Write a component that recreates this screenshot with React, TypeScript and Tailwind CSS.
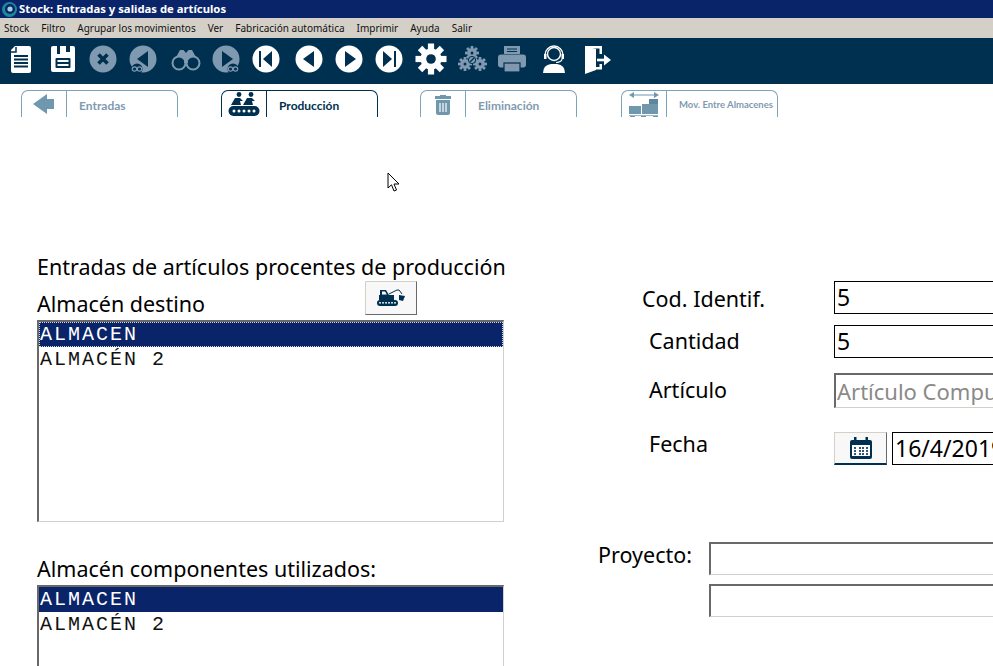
import type { ReactNode } from 'react';

const ON = '#ffffff';
const OFF = '#7f9ab0';
const BG = '#00304f';

const menus = ['Stock', 'Filtro', 'Agrupar los movimientos', 'Ver', 'Fabricación automática', 'Imprimir', 'Ayuda', 'Salir'];

function Svg({ size = 32, children }: { size?: number; children: ReactNode }) {
  return (
    <svg width={size} height={size} viewBox="0 0 32 32">
      {children}
    </svg>
  );
}

function DocIcon() {
  return (
    <Svg>
      <path d="M10 3 h14 a2 2 0 0 1 2 2 v23 a2 2 0 0 1 -2 2 h-16 a2 2 0 0 1 -2 -2 v-21 z" fill={ON} />
      <path d="M11 4 v5 h-5" fill="none" stroke={BG} strokeWidth="1.5" />
      <path d="M9 13 h14 M9 16.5 h14 M9 20 h14 M9 23.5 h14" stroke={BG} strokeWidth="1.8" />
    </Svg>
  );
}

function SaveIcon() {
  return (
    <Svg>
      <path d="M6 3 h20 a2 2 0 0 1 2 2 v22 a2 2 0 0 1 -2 2 h-20 a2 2 0 0 1 -2 -2 v-22 a2 2 0 0 1 2 -2 z" fill={ON} />
      <rect x="10" y="3" width="3" height="8" fill={BG} />
      <rect x="19" y="3" width="4" height="6" fill={BG} />
      <rect x="8.5" y="15" width="15" height="10" rx="1" fill={BG} />
      <path d="M10.5 18 h11 M10.5 22 h11" stroke={ON} strokeWidth="1.8" />
    </Svg>
  );
}

function CloseIcon() {
  return (
    <Svg>
      <circle cx="16" cy="16" r="13.5" fill={OFF} />
      <path d="M11.5 11.5 L20.5 20.5 M20.5 11.5 L11.5 20.5" stroke={BG} strokeWidth="3.6" />
    </Svg>
  );
}

function BinocularsIcon() {
  return (
    <Svg>
      <path d="M4 18 L10 7 h3.5 l2.5 3 l2.5 -3 h3.5 l6 11 z" fill={OFF} />
      <circle cx="9" cy="20" r="6.5" fill={BG} stroke={OFF} strokeWidth="2" />
      <circle cx="23" cy="20" r="6.5" fill={BG} stroke={OFF} strokeWidth="2" />
      <rect x="14" y="17" width="4" height="3" fill={OFF} />
    </Svg>
  );
}

function NavIcon({ dir, bar, color, search }: { dir: 'l' | 'r'; bar?: boolean; color: string; search?: boolean }) {
  const tri = dir === 'l' ? 'M21 8 V24 L10 16 Z' : 'M12 8 V24 L23 16 Z';
  const barX = dir === 'l' ? 10 : 22;
  const shifted = bar ? (dir === 'l' ? 'M22 8 V24 L13 16 Z' : 'M10 8 V24 L19 16 Z') : tri;
  return (
    <Svg>
      <circle cx="16" cy="16" r="13.5" fill={color} />
      <path d={shifted} fill={BG} />
      {bar && <rect x={barX - 1} y="8" width="2" height="16" fill={BG} />}
      {search && (
        <>
          <circle cx={dir === 'l' ? 10 : 23} cy="26" r="5.5" fill={BG} />
          <circle cx={dir === 'l' ? 7.5 : 20.5} cy="26" r="2.2" fill="none" stroke={color} strokeWidth="1.2" />
          <circle cx={dir === 'l' ? 12.5 : 25.5} cy="26" r="2.2" fill="none" stroke={color} strokeWidth="1.2" />
        </>
      )}
    </Svg>
  );
}

function GearShape({ cx, cy, r, c, hole }: { cx: number; cy: number; r: number; c: string; hole: number }) {
  const teeth = [0, 45, 90, 135, 180, 225, 270, 315];
  return (
    <g>
      {teeth.map((a) => (
        <rect
          key={a}
          x={cx - r * 0.2}
          y={cy - r}
          width={r * 0.4}
          height={r * 0.5}
          fill={c}
          transform={`rotate(${a} ${cx} ${cy})`}
        />
      ))}
      <circle cx={cx} cy={cy} r={r * 0.68} fill={c} />
      <circle cx={cx} cy={cy} r={hole} fill={BG} />
    </g>
  );
}

function PrinterIcon() {
  return (
    <Svg>
      <path d="M8 3 h16 v8 h-16 z" fill={OFF} />
      <path d="M11 6 h10 M11 8.5 h10" stroke={BG} strokeWidth="1.2" />
      <rect x="2" y="11.5" width="28" height="13" rx="3" fill={OFF} />
      <rect x="8" y="20" width="16" height="9" fill={OFF} stroke={BG} strokeWidth="1.2" />
    </Svg>
  );
}

function SupportIcon() {
  return (
    <Svg>
      <circle cx="16" cy="11" r="6.5" fill={BG} stroke={ON} strokeWidth="1.4" />
      <path d="M7 12 a9 9 0 0 1 18 0" fill="none" stroke={ON} strokeWidth="1.4" />
      <rect x="6" y="11" width="2.5" height="5" fill={ON} />
      <rect x="23.5" y="11" width="2.5" height="5" fill={ON} />
      <path d="M24 16 q0 3 -6 3.5" fill="none" stroke={ON} strokeWidth="1.2" />
      <path d="M5 30 q0 -8 8 -9 h6 q8 1 8 9 z" fill={ON} />
    </Svg>
  );
}

function ExitIcon() {
  return (
    <Svg>
      <path d="M4 3 L15 6 V27 L4 31 Z" fill={ON} />
      <path d="M4 3 h17 v8 h-2.5 v-5.5 h-14.5 z" fill={ON} />
      <path d="M15 24 h3.5 v-3 h2.5 v5.5 h-6 z" fill={ON} />
      <path d="M16 17 h10" stroke={ON} strokeWidth="2.6" />
      <path d="M23 11.5 L30 17 L23 22.5 Z" fill={ON} />
    </Svg>
  );
}

const tools: { cell: string; icon: ReactNode }[] = [
  { cell: 'w-[41px]', icon: <DocIcon /> },
  { cell: 'w-[44px]', icon: <SaveIcon /> },
  { cell: 'w-[36px]', icon: <CloseIcon /> },
  { cell: 'w-[44px]', icon: <NavIcon dir="l" color={OFF} search /> },
  { cell: 'w-[42px]', icon: <BinocularsIcon /> },
  { cell: 'w-[38px]', icon: <NavIcon dir="r" color={OFF} search /> },
  { cell: 'w-[42px]', icon: <NavIcon dir="l" bar color={ON} /> },
  { cell: 'w-[44px]', icon: <NavIcon dir="l" color={ON} /> },
  { cell: 'w-[36px]', icon: <NavIcon dir="r" color={ON} /> },
  { cell: 'w-[44px]', icon: <NavIcon dir="r" bar color={ON} /> },
  {
    cell: 'w-[40px]',
    icon: (
      <Svg>
        <GearShape cx={16} cy={16} r={15.5} c={ON} hole={4.8} />
      </Svg>
    ),
  },
  {
    cell: 'w-[42px]',
    icon: (
      <Svg>
        <GearShape cx={16} cy={10} r={7} c={OFF} hole={1.5} />
        <GearShape cx={9} cy={21} r={7} c={OFF} hole={1.5} />
        <GearShape cx={24} cy={21} r={7} c={OFF} hole={1.5} />
        <circle cx="16" cy="17" r="3.6" fill={OFF} stroke={BG} strokeWidth="1" />
        <path d="M14 19 L18 15" stroke={BG} strokeWidth="1.2" />
      </Svg>
    ),
  },
  { cell: 'w-[38px]', icon: <PrinterIcon /> },
  { cell: 'w-[46px]', icon: <SupportIcon /> },
  { cell: 'w-[40px]', icon: <ExitIcon /> },
];

function ConveyorIcon() {
  const c = '#00304f';
  return (
    <svg width="32" height="24" viewBox="0 0 32 24">
      <circle cx="11" cy="2.5" r="2.4" fill={c} />
      <path d="M3 13 L7 6 h5 l3 3 h-3 l1 4 z" fill={c} />
      <circle cx="23" cy="2.5" r="2.4" fill={c} />
      <path d="M15 13 L19 6 h5 l3 3 h-3 l1 4 z" fill={c} />
      <rect x="0.5" y="14" width="31" height="10" rx="5" fill={c} />
      {[6, 11, 16, 21, 26].map((x) => (
        <circle key={x} cx={x} cy="19" r="1.5" fill="#ffffff" />
      ))}
    </svg>
  );
}

function ArrowIcon() {
  return (
    <svg width="22" height="20" viewBox="0 0 22 20">
      <path d="M0 10 L14 0 L14 5 L21 5 L21 15 L14 15 L14 20 Z" fill="#6f97ae" />
    </svg>
  );
}

function TrashIcon() {
  return (
    <svg width="18" height="22" viewBox="0 0 18 22">
      <path d="M6 2 h6 v1 h5 v3 h-16 v-3 h5 z" fill="#6f97ae" />
      <path d="M2 7 h14 v13 a2 2 0 0 1 -2 2 h-10 a2 2 0 0 1 -2 -2 z" fill="#6f97ae" />
      <path d="M6 10 v9 M9 10 v9 M12 10 v9" stroke="#ffffff" strokeWidth="1.2" />
    </svg>
  );
}

function MoveIcon() {
  return (
    <svg width="32" height="27" viewBox="0 0 32 27">
      <path d="M3 4 h26" stroke="#6f97ae" strokeWidth="1" />
      <path d="M1 4 L6 1 V7 Z M31 4 L26 1 V7 Z" fill="#6f97ae" />
      <rect x="21" y="8" width="9" height="5" fill="#5d879e" />
      <rect x="14" y="13" width="16" height="10" fill="#7197ad" />
      <rect x="1" y="15" width="12" height="8" fill="#7197ad" />
      <path d="M1 24 h29 v1 h-29 z" fill="#9db8c8" />
      <rect x="2" y="25" width="5" height="2" fill="#7197ad" />
      <rect x="13" y="25" width="5" height="2" fill="#7197ad" />
      <rect x="25" y="25" width="5" height="2" fill="#7197ad" />
    </svg>
  );
}

function ExcavatorIcon() {
  const c = '#00304f';
  return (
    <svg width="29" height="17" viewBox="0 0 29 17">
      <path d="M3 1 h6 l3 5 h5 v5 h-15 v-5 h1 z" fill={c} />
      <path d="M5 2.5 h3 l1.8 3 h-4.8 z" fill="#ffffff" />
      <path d="M12 5 L20 1 h2 L25 5" fill="none" stroke={c} strokeWidth="1" />
      <path d="M22 6 L28 7 L26 12 L22 11 Z" fill={c} />
      <rect x="0" y="11" width="21" height="6" rx="3" fill={c} />
      {[3, 6, 9, 12, 15, 18].map((x) => (
        <rect key={x} x={x - 0.8} y="13" width="1.6" height="1.6" fill="#ffffff" />
      ))}
    </svg>
  );
}

function CalendarIcon() {
  const c = '#00304f';
  return (
    <svg width="24" height="22" viewBox="0 0 24 22">
      <rect x="1" y="3" width="22" height="19" rx="2" fill={c} />
      <rect x="5" y="0" width="2.5" height="5" fill={c} />
      <rect x="16.5" y="0" width="2.5" height="5" fill={c} />
      <rect x="3" y="8" width="18" height="11" fill="#ffffff" />
      <path d="M6 10 v8 M11 10 v8 M14 10 v8 M18 10 v8" stroke={c} strokeWidth="1.6" strokeDasharray="2 1" />
    </svg>
  );
}

function Tab({ icon, label, active, small, className }: { icon: ReactNode; label: string; active?: boolean; small?: boolean; className: string }) {
  return (
    <div
      className={`flex h-[27px] w-[157px] overflow-hidden rounded-t-[7px] border border-b-0 ${
        active ? 'border-[#00304f]' : 'border-[#7fa3b8]'
      } ${className}`}
    >
      <div className={`flex w-[45px] shrink-0 items-center justify-center border-r ${active ? 'border-[#00304f]' : 'border-[#7fa3b8]'}`}>{icon}</div>
      <span
        className={`flex items-center pt-[3px] pl-[12px] font-['Lato'] font-bold ${small ? 'text-[9.5px]' : 'text-[12px]'} ${
          active ? 'text-[#00304f]' : 'text-[#7f9ab0]'
        }`}
      >
        {label}
      </span>
    </div>
  );
}

function ListBox({ focused, className }: { focused?: boolean; className: string }) {
  return (
    <ul className={`w-[467px] border-t-2 border-l-2 border-r border-b border-t-[#696969] border-l-[#696969] border-r-[#d0d0d0] border-b-[#d0d0d0] bg-white font-['Liberation_Mono',monospace] text-[20px] tracking-[2px] ${className}`}>
      <li className={`flex h-[25px] items-center bg-[#0a246a] pl-[1px] text-white ${focused ? 'outline-1 -outline-offset-1 outline-dotted outline-[#d8d8d8]' : ''}`}>ALMACEN</li>
      <li className="flex h-[25px] items-center pl-[1px] text-[#111]">ALMACÉN 2</li>
    </ul>
  );
}

const sunken = 'border-t-2 border-l-2 border-r border-b border-t-[#696969] border-l-[#696969] border-r-[#d0d0d0] border-b-[#d0d0d0]';

export default function App() {
  return (
    <div className="relative h-[666px] w-[993px] overflow-hidden bg-white font-['Noto_Sans',sans-serif] text-black">
      {/* title */}
      <div className="flex h-[18px] items-center bg-[#0a246a] pl-[1px]">
        <svg width="17" height="17" viewBox="0 0 17 17">
          <circle cx="8.5" cy="8.5" r="7.5" fill="#1a8a96" />
          <circle cx="9" cy="8" r="5" fill="#0a246a" />
          <circle cx="9" cy="8" r="2.6" fill="#9fd4dc" />
        </svg>
        <span className="ml-[1px] font-['Noto_Sans'] text-[11.3px] font-bold text-white">Stock: Entradas y salidas de artículos</span>
      </div>

      {/* menu */}
      <div className="flex h-[20px] items-center gap-[12px] bg-[#d4d0c8] pl-[4px] font-['Noto_Sans'] text-[10px] text-[#111]">
        {menus.map((m) => (
          <span key={m}>{m}</span>
        ))}
      </div>

      {/* toolbar */}
      <div className="flex h-[46px] items-center bg-[#00304f] pb-[4px]">
        {tools.map((t, i) => (
          <div key={i} className={`flex shrink-0 items-center justify-center ${t.cell}`}>
            {t.icon}
          </div>
        ))}
      </div>

      {/* tabs */}
      <div className="flex pt-[6px] pl-[21px]">
        <Tab icon={<ArrowIcon />} label="Entradas" className="" />
        <Tab icon={<ConveyorIcon />} label="Producción" active className="ml-[43px]" />
        <Tab icon={<TrashIcon />} label="Eliminación" className="ml-[42px]" />
        <Tab icon={<MoveIcon />} label="Mov. Entre Almacenes" small className="ml-[44px]" />
      </div>

      {/* form */}
      <div className="flex">
        <div className="ml-[37px] w-[467px] shrink-0 pt-[137px]">
          <div className="h-[27px] whitespace-nowrap text-[21.5px] leading-[26px]">Entradas de artículos procentes de producción</div>
          <div className="flex h-[39px] items-end">
            <span className="text-[21.5px] leading-[33px]">Almacén destino</span>
            <button className="mr-[87px] mb-[5px] ml-auto flex h-[34px] w-[52px] items-center justify-center border border-t-[#d4d0c8] border-r-[#696969] border-b-[#696969] border-l-[#d4d0c8] bg-[#f8f8f8] pb-[1px]">
              <ExcavatorIcon />
            </button>
          </div>
          <ListBox focused className="h-[202px]" />
          <div className="mt-[33px] h-[30px] whitespace-nowrap text-[21.5px] leading-[28px]">Almacén componentes utilizados:</div>
          <ListBox className="h-[120px]" />
        </div>

        <div className="ml-[94px] w-[395px] shrink-0 overflow-hidden pt-[164px] text-[21.5px]">
          <div className="flex h-[33px] items-center">
            <span className="w-[236px] shrink-0 pt-[4px] pl-[44px]">Cod. Identif.</span>
            <input readOnly value="5" className="h-[33px] w-[200px] shrink-0 border border-black pl-[2px] text-[23px] outline-none" />
          </div>
          <div className="mt-[11px] flex h-[33px] items-center">
            <span className="w-[236px] shrink-0 pl-[51px]">Cantidad</span>
            <input readOnly value="5" className="h-[33px] w-[200px] shrink-0 border border-black pl-[2px] text-[23px] outline-none" />
          </div>
          <div className="mt-[15px] flex h-[35px] items-center">
            <span className="w-[236px] shrink-0 pl-[51px]">Artículo</span>
            <input readOnly value="Artículo Compuesto" className={`h-[35px] w-[200px] shrink-0 pl-[1px] text-[22px] text-[#8a8a8a] outline-none ${sunken} border-b-[#d4d0c8]`} />
          </div>
          <div className="mt-[24px] flex h-[33px] items-center">
            <span className="w-[236px] shrink-0 pb-[8px] pl-[51px]">Fecha</span>
            <button className="flex h-[33px] w-[53px] shrink-0 items-center justify-center border border-t-[#d4d0c8] border-r-[#696969] border-b-2 border-l-[#d4d0c8] border-b-[#00304f] bg-[#f8f8f8]">
              <CalendarIcon />
            </button>
            <input readOnly value="16/4/2019" className="ml-[5px] h-[33px] w-[150px] shrink-0 border border-black pl-[2px] text-[23px] outline-none" />
          </div>
          <div className="mt-[77px] flex h-[33px] items-center">
            <span className="w-[111px] shrink-0 pb-[6px]">Proyecto:</span>
            <div className={`h-[33px] w-[300px] shrink-0 ${sunken}`} />
          </div>
          <div className="mt-[9px] flex h-[33px] items-center">
            <span className="w-[111px] shrink-0" />
            <div className={`h-[33px] w-[300px] shrink-0 ${sunken}`} />
          </div>
        </div>
      </div>

      {/* mouse pointer left in the capture */}
      <svg className="absolute top-[172px] left-[387px]" width="13" height="21" viewBox="0 0 13 21">
        <path d="M1 1 V16 L4.5 12.8 L7 19 L9.5 18 L7 12 H12 Z" fill="#ffffff" stroke="#000000" strokeWidth="1" />
      </svg>
    </div>
  );
}
